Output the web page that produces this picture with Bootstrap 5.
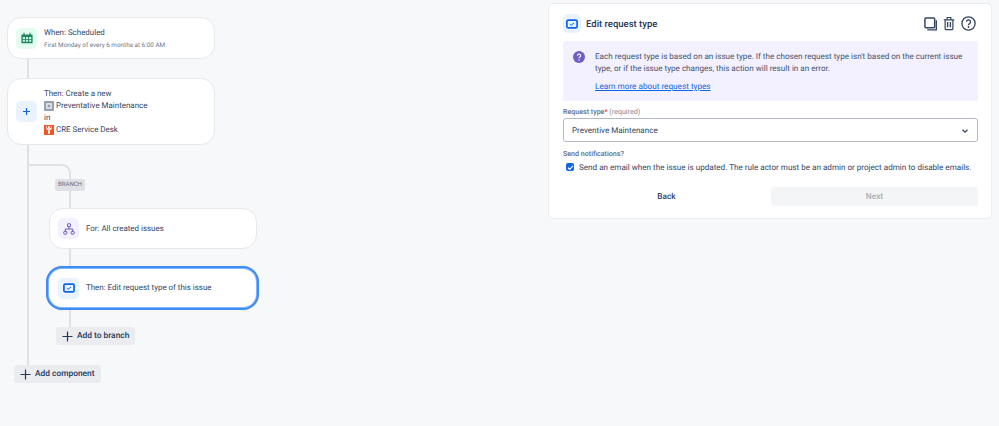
<!DOCTYPE html>
<html lang="en">
<head>
<meta charset="utf-8">
<title>Edit request type</title>
<link href="https://cdn.jsdelivr.net/npm/bootstrap@5.3.0/dist/css/bootstrap.min.css" rel="stylesheet">
<style>
html,body{height:100%;}
body{background:#f7f8f9;font-family:Roboto,"Open Sans",sans-serif;color:#344563;font-size:7.95px;line-height:12px;overflow:hidden;text-rendering:geometricPrecision;}
.stage{width:999px;height:426px;}
.flow-col{width:548px;flex:none;padding:17px 0 0 7px;}
.rule-card{width:208px;background:#fff;border:1px solid #e6e8ec;border-radius:14px;padding:0 8px;gap:7px;}
.rule-card.h-a{height:42px;}
.rule-card.h-b{height:67px;}
.tile{width:21px;height:21px;border-radius:5px;flex:none;}
.t-green{background:#e3fcef;}
.t-blue{background:#e9f2ff;}
.t-purple{background:#f3f0ff;}
.top-text{padding-top:2px;}
.sub-text{font-size:6.35px;color:#6b778c;line-height:11px;margin-top:1px;}
.line-row{line-height:11.8px;padding-top:1px;}
.inline-ico{width:10px;height:10px;flex:none;margin-right:2px;}
.conn{width:2px;background:#dfe1e6;margin-left:20px;}
.c1{height:19px;}
.elbow{width:42px;height:15px;border-top:2px solid #dfe1e6;border-right:2px solid #dfe1e6;border-top-right-radius:9px;}
.branch-tag{background:#dfe1e6;color:#5e6c84;font-size:6px;line-height:12px;height:12px;border-radius:2px;width:30px;text-align:center;margin-left:26px;}
.stem{width:2px;background:#dfe1e6;margin-left:40px;}
.s1{height:17px;}
.s2{height:17px;}
.s3{height:17px;}
.rule-card.branch-card{margin-left:20px;height:41px;}
.rule-card.sel{width:213px;height:44px;margin-left:17px;border:3px solid #85b8ff;outline:2px solid #3f8cf5;outline-offset:-2.5px;border-radius:16px;padding:0 9px;}
.add-btn{background:#ebecf0;border-radius:3px;height:18px;color:#253858;font-weight:500;font-size:8.4px;gap:4px;padding:0 6px;width:max-content;}
.add-a{margin-left:27px;}
.add-b{margin-left:7px;}
.trunk-wrap{margin-left:20px;border-left:2px solid #dfe1e6;height:220px;padding-top:19px;box-sizing:border-box;}
.panel{width:444px;height:216px;margin-top:3px;background:#fff;border:1px solid #ebecf0;border-radius:5px;padding:10px 13px 0 14px;flex:none;}
.head-row{height:19px;margin-bottom:8px;}
.head-tile{width:18px;height:19px;border-radius:5px;background:#e9f2ff;flex:none;margin-right:5px;}
.panel-title{font-size:9.5px;font-weight:500;color:#253858;padding-top:2px;}
.tools{gap:6px;margin-right:2px;}
.info-box{background:#f3f0ff;border-radius:2px;height:60px;padding:10px 10px 0 10px;gap:10px;}
.info-box p{margin:0 0 7px;font-size:8.1px;line-height:11.5px;color:#42526e;}
.info-box a{color:#0c66e4;font-size:8.2px;}
.lab{font-size:7.1px;line-height:11px;font-weight:500;color:#5e6c84;}
.req-lab{margin-top:5px;margin-bottom:1px;}
.lab .req{color:#de350b;}
.lab .hint{font-weight:400;color:#7a869a;}
.pick{height:24px;border:1.5px solid #b3bac5;border-radius:3px;padding:1px 8px 0;font-size:8.05px;color:#344563;}
.notify-lab{margin-top:6px;}
.tick{width:8px;height:8px;background:#0c66e4;border-radius:2px;flex:none;}
.tick-row{margin-left:3px;margin-top:2px;gap:5px;font-size:8.1px;color:#344563;}
.act-row{margin-top:14px;}
.act{width:207px;height:19px;border-radius:3px;font-weight:500;font-size:8.3px;}
.act-back{color:#344563;}
.act-next{background:#f4f5f7;color:#a5adba;}
</style>
</head>
<body>
<div class="stage d-flex">
  <div class="flow-col">
    <div class="rule-card h-a d-flex align-items-center">
      <div class="tile t-green d-flex align-items-center justify-content-center">
        <svg width="12" height="12" viewBox="0 0 12 12"><path d="M1 2.500h10a.6.6 0 0 1 .6.6v7.600a.6.6 0 0 1-.6.6H1a.6.6 0 0 1-.6-.6V3.100a.6.600 0 0 1 .6-.6z" fill="#1f845a"/><path d="M3 .8v2.400M9 .8v2.400" stroke="#1f845a" stroke-width="1.100"/><path d="M1.700 5h2.300v2H1.700zM4.900 5h2.200v2H4.900zM8 5h2.300v2H8zM1.700 7.800h2.300v2H1.700zM4.900 7.800h2.200v2H4.900zM8 7.800h2.300v2H8z" fill="#baf3db"/></svg>
      </div>
      <div class="top-text">
        <div>When: Scheduled</div>
        <div class="sub-text">First Monday of every 6 months at 6:00 AM</div>
      </div>
    </div>
    <div class="conn c1"></div>
    <div class="rule-card h-b d-flex align-items-center">
      <div class="tile t-blue d-flex align-items-center justify-content-center">
        <svg width="9" height="9" viewBox="0 0 9 9"><path d="M4.500 1v7M1 4.500h7" stroke="#0c66e4" stroke-width="1.200"/></svg>
      </div>
      <div class="line-row">
        <div>Then: Create a new</div>
        <div class="d-flex align-items-center">
          <svg class="inline-ico" viewBox="0 0 10 10"><rect width="10" height="10" rx="1" fill="#97a0af"/><rect x="2" y="2" width="6" height="6" rx="1" fill="#dfe1e6"/><circle cx="5" cy="5" r="1.500" fill="#97a0af"/></svg>
          <span>Preventative Maintenance</span>
        </div>
        <div>in</div>
        <div class="d-flex align-items-center">
          <svg class="inline-ico" viewBox="0 0 10 10"><rect width="10" height="10" fill="#f2542d"/><path d="M2.200 1v2.500a1.500 1.500 0 0 0 1.800 1.400V9h2V4.900a1.500 1.500 0 0 0 1.800-1.400V1H6.900v2H6V1.200H4V3H3.100V1z" fill="#ffe2d6"/></svg>
          <span>CRE Service Desk</span>
        </div>
      </div>
    </div>
    <div class="trunk-wrap">
      <div class="elbow"></div>
      <div class="branch-tag">BRANCH</div>
      <div class="stem s1"></div>
      <div class="rule-card d-flex align-items-center branch-card">
        <div class="tile t-purple d-flex align-items-center justify-content-center">
          <svg width="12" height="12" viewBox="0 0 12 12" fill="none" stroke="#6e5dc6" stroke-width="1"><rect x="4.500" y=".8" width="3" height="2.800" rx=".4"/><rect x=".8" y="8.400" width="3" height="2.800" rx=".6"/><rect x="8.200" y="8.400" width="3" height="2.800" rx=".6"/><path d="M6 3.600V6M2.300 8.400V6h7.400v2.400"/></svg>
        </div>
        <div>For: All created issues</div>
      </div>
      <div class="stem s2"></div>
      <div class="rule-card sel d-flex align-items-center">
        <div class="tile t-blue d-flex align-items-center justify-content-center">
          <svg width="12" height="10" viewBox="0 0 12 10"><rect x=".9" y="1.200" width="10.200" height="7.600" rx="1.200" fill="none" stroke="#0c66e4" stroke-width="1.700"/><path d="M3.800 5.300l1.300 1 2.900-2.300" stroke="#0c66e4" stroke-width="1" fill="none"/></svg>
        </div>
        <div>Then: Edit request type of this issue</div>
      </div>
      <div class="stem s3"></div>
      <div class="add-btn add-a d-flex align-items-center">
        <svg width="11" height="11" viewBox="0 0 11 11"><path d="M5.500 .5v10M.5 5.500h10" stroke="#253858" stroke-width="1.200"/></svg>
        <span>Add to branch</span>
      </div>
    </div>
    <div class="add-btn add-b d-flex align-items-center">
      <svg width="11" height="11" viewBox="0 0 11 11"><path d="M5.500 .5v10M.5 5.500h10" stroke="#253858" stroke-width="1.200"/></svg>
      <span>Add component</span>
    </div>
  </div>
  <div class="panel">
    <div class="head-row d-flex align-items-center">
      <div class="head-tile d-flex align-items-center justify-content-center">
        <svg width="12" height="10" viewBox="0 0 12 10"><rect x=".9" y="1.200" width="10.200" height="7.600" rx="1.200" fill="none" stroke="#0c66e4" stroke-width="1.700"/><path d="M3.800 5.300l1.300 1 2.900-2.300" stroke="#0c66e4" stroke-width="1" fill="none"/></svg>
      </div>
      <div class="panel-title flex-grow-1">Edit request type</div>
      <div class="tools d-flex align-items-center">
        <svg width="13" height="14" viewBox="0 0 14 15" fill="none" stroke="#344563"><rect x="1" y="1" width="10.500" height="10.500" rx="1" stroke-width="1.600"/><path d="M13.300 3.500v10.300H3.500" stroke-width="1.500"/></svg>
        <svg width="12" height="15" viewBox="0 0 13 15" fill="none" stroke="#344563" stroke-width="1.300"><path d="M.8 3.500h11.400M4.500 3.500V1h4v2.500M2.300 3.500v9.700a1 1 0 0 0 1 1h6.400a1 1 0 0 0 1-1V3.500"/><path d="M5 6v5.500M8 6v5.500" stroke-width="1.500"/></svg>
        <svg width="15" height="15" viewBox="0 0 15 15" fill="none" stroke="#344563"><circle cx="7.500" cy="7.500" r="6.600" stroke-width="1.300"/><path d="M5.500 5.800a2 2 0 1 1 3 1.800c-.7.400-1 .8-1 1.600" stroke-width="1.300"/><circle cx="7.500" cy="11" r=".9" fill="#344563" stroke="none"/></svg>
      </div>
    </div>
    <div class="info-box d-flex">
      <svg width="12" height="12" viewBox="0 0 12 12" class="flex-shrink-0"><circle cx="6" cy="6" r="6" fill="#6e5dc6"/><path d="M4.400 4.700a1.600 1.600 0 1 1 2.400 1.400c-.5.300-.8.600-.8 1.200" stroke="#fff" stroke-width="1.100" fill="none"/><circle cx="6" cy="9" r=".7" fill="#fff"/></svg>
      <div class="flex-grow-1">
        <p>Each request type is based on an issue type. If the chosen request type isn't based on the current issue type, or if the issue type changes, this action will result in an error.</p>
        <a href="#">Learn more about request types</a>
      </div>
    </div>
    <div class="lab req-lab">Request type<span class="req">*</span> <span class="hint">(required)</span></div>
    <div class="pick d-flex align-items-center justify-content-between">
      <span>Preventive Maintenance</span>
      <svg width="8" height="8" viewBox="0 0 8 8"><path d="M1.500 2.800L4 5.200l2.500-2.400" stroke="#344563" stroke-width="1.300" fill="none"/></svg>
    </div>
    <div class="lab notify-lab">Send notifications?</div>
    <div class="tick-row d-flex align-items-center">
      <span class="tick d-flex align-items-center justify-content-center">
        <svg width="7" height="7" viewBox="0 0 7 7"><path d="M1 3.700l1.700 1.600L6 1.800" stroke="#fff" stroke-width="1.200" fill="none"/></svg>
      </span>
      <span>Send an email when the issue is updated. The rule actor must be an admin or project admin to disable emails.</span>
    </div>
    <div class="d-flex justify-content-between act-row">
      <div class="act act-back d-flex align-items-center justify-content-center">Back</div>
      <div class="act act-next d-flex align-items-center justify-content-center">Next</div>
    </div>
  </div>
</div>
</body>
</html>
